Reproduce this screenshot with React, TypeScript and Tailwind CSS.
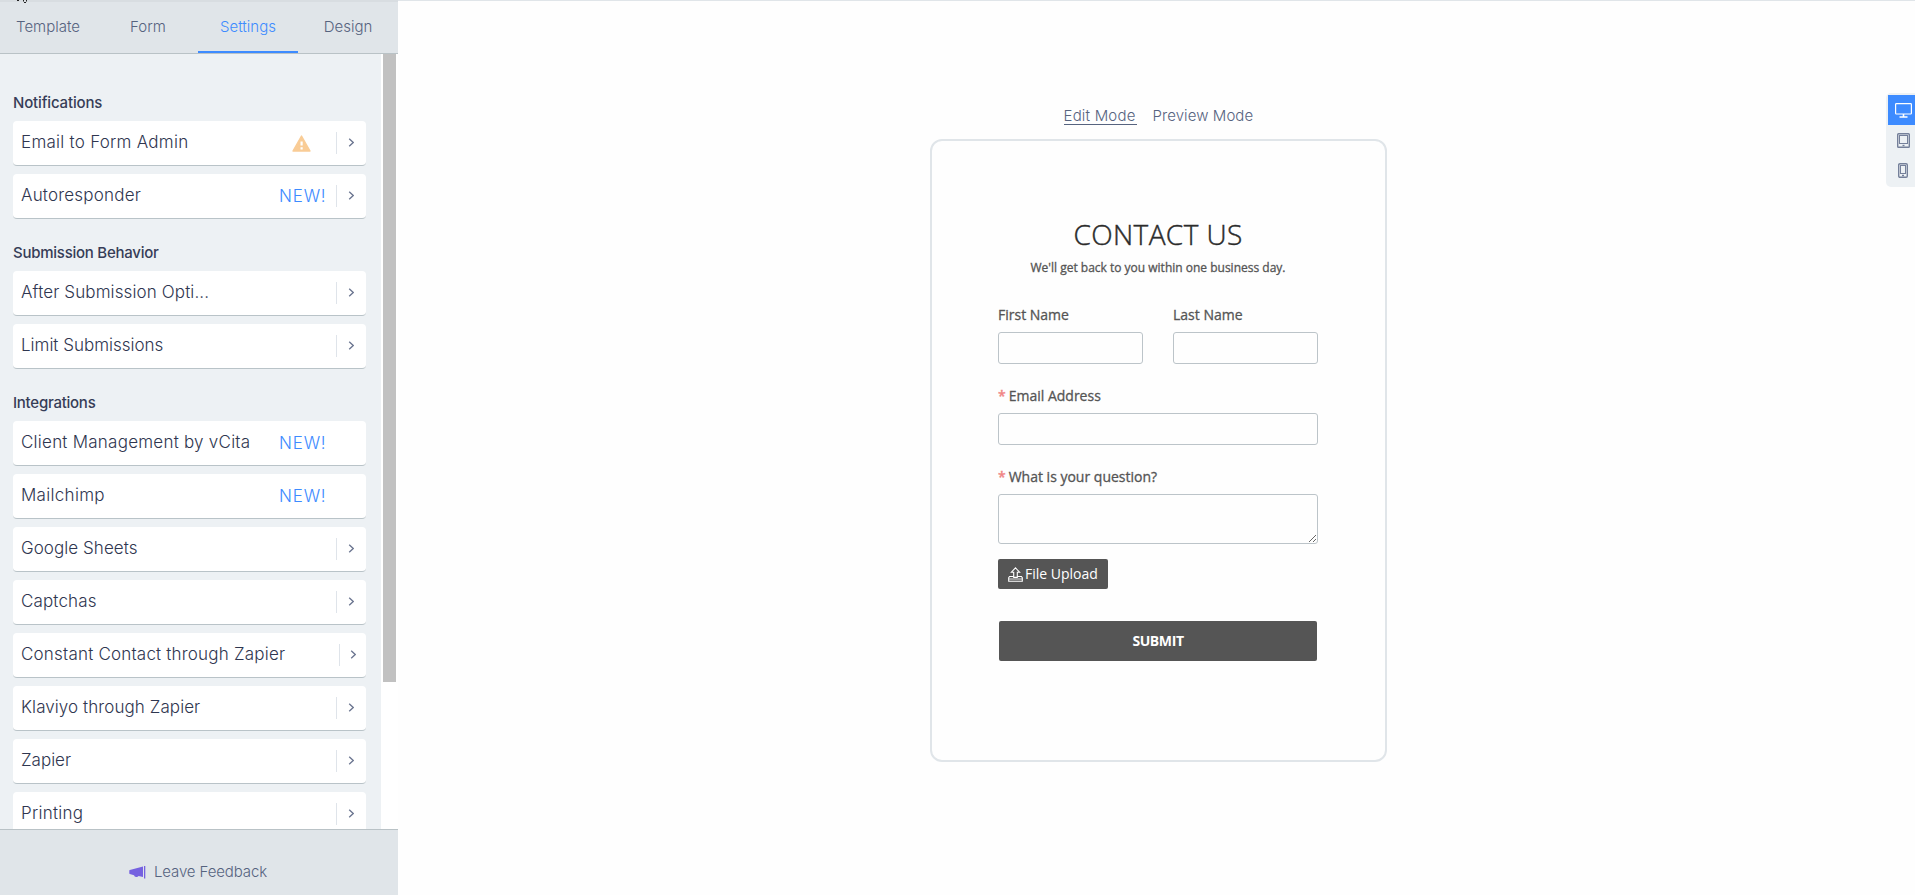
import { useState } from "react";

type Row = {
  label: string;
  tracking: string;
  isNew?: boolean;
  warning?: boolean;
  arrow?: boolean;
  wide?: boolean;
};

const tabs = ["Template", "Form", "Settings", "Design"];

const sections: { title: string; tracking: string; rows: Row[] }[] = [
  {
    title: "Notifications",
    tracking: "tracking-[-0.15px]",
    rows: [
      { label: "Email to Form Admin", tracking: "tracking-[0.26px]", warning: true, arrow: true },
      { label: "Autoresponder", tracking: "tracking-[0.2px]", isNew: true, arrow: true },
    ],
  },
  {
    title: "Submission Behavior",
    tracking: "tracking-[-0.25px]",
    rows: [
      { label: "After Submission Opti...", tracking: "tracking-[0.12px]", arrow: true },
      { label: "Limit Submissions", tracking: "tracking-normal", arrow: true },
    ],
  },
  {
    title: "Integrations",
    tracking: "tracking-[-0.25px]",
    rows: [
      { label: "Client Management by vCita", tracking: "tracking-[0.24px]", isNew: true },
      { label: "Mailchimp", tracking: "tracking-[0.3px]", isNew: true },
      { label: "Google Sheets", tracking: "tracking-[0.06px]", arrow: true },
      { label: "Captchas", tracking: "tracking-[0.14px]", arrow: true },
      { label: "Constant Contact through Zapier", tracking: "tracking-[0.2px]", arrow: true, wide: true },
      { label: "Klaviyo through Zapier", tracking: "tracking-[0.08px]", arrow: true },
      { label: "Zapier", tracking: "tracking-normal", arrow: true },
      { label: "Printing", tracking: "tracking-[0.26px]", arrow: true },
    ],
  },
];

function WarningIcon() {
  return (
    <svg width="19" height="17" viewBox="0 0 19 17" className="shrink-0">
      <path d="M9.5 1 L18 16 H1 Z" fill="#f9cc96" stroke="#f9cc96" strokeWidth="1.4" strokeLinejoin="round" />
      <path d="M8.5 6.4h2.2v4.2h-2.2z M8.5 12.2h2.2v2.2h-2.2z" fill="#fff" />
    </svg>
  );
}

function Chevron() {
  return (
    <svg width="6" height="9" viewBox="0 0 6 9" fill="none" className="shrink-0">
      <path d="M1.2 0.8 L5.2 4.5 L1.2 8.2" stroke="#6b7590" strokeWidth="1.3" />
    </svg>
  );
}

function SettingRow({ row }: { row: Row }) {
  return (
    <div className="flex h-[45px] w-[353px] shrink-0 items-center rounded-[4px] border-b border-[#b9c3c8] bg-white pl-2">
      <span
        className={`flex-1 whitespace-nowrap pb-[2px] text-[17px] font-light leading-[22px] text-[#2f3650] ${row.tracking}`}
      >
        {row.label}
      </span>
      {row.warning && (
        <span className="mr-[25px]">
          <WarningIcon />
        </span>
      )}
      {row.isNew && (
        <span className="mr-[10px] w-[47px] whitespace-nowrap text-[17px] font-light leading-[22px] tracking-[0.8px] text-[#3d8bff]">
          NEW!
        </span>
      )}
      {row.arrow ? (
        <span
          className={`flex h-[22px] items-center border-l border-[#dfe4ea] pb-px ${row.wide ? "w-[27px] pl-[10px]" : "w-[30px] pl-[11px]"}`}
        >
          <Chevron />
        </span>
      ) : (
        <span className="w-[30px]" />
      )}
    </div>
  );
}

function UploadIcon() {
  return (
    <svg width="15" height="15" viewBox="0 0 15 15" fill="none" stroke="#fff" strokeWidth="1.1">
      <path d="M7.5 0.9 L11.6 5.2 H9.3 V10.4 H5.7 V5.2 H3.4 Z" />
      <path d="M5.7 9.5 H1.6 L0.7 10.6 V14.2 H14.3 V10.6 L13.4 9.5 H9.3" />
      <path d="M0.7 12 H14.3" strokeWidth="0.8" />
    </svg>
  );
}

function MonitorIcon() {
  return (
    <svg width="17" height="15" viewBox="0 0 17 15" fill="none" stroke="#fff">
      <rect x="0.6" y="0.6" width="15.8" height="10.4" rx="0.8" strokeWidth="1.2" />
      <path d="M8.5 11v3 M4.5 14h8" strokeWidth="1.6" />
    </svg>
  );
}

function TabletIcon() {
  return (
    <svg width="13" height="15" viewBox="0 0 13 15" fill="none" stroke="#75809a">
      <rect x="0.7" y="0.7" width="11.6" height="13.6" rx="0.8" strokeWidth="1.4" />
      <rect x="2.5" y="2.5" width="8" height="8" />
      <path d="M5.5 12.5h2" strokeWidth="1.4" />
    </svg>
  );
}

function PhoneIcon() {
  return (
    <svg width="10" height="15" viewBox="0 0 10 15" fill="none" stroke="#75809a">
      <rect x="0.7" y="0.7" width="8.6" height="13.6" rx="1.2" strokeWidth="1.4" />
      <rect x="2.5" y="2.5" width="5" height="8" />
      <path d="M4 12.5h2" strokeWidth="1.4" />
    </svg>
  );
}

function MegaphoneIcon() {
  return (
    <svg width="17" height="13" viewBox="0 0 17 13" fill="#7561e0">
      <path d="M14 0.6 V11 L9.6 10 A2.6 2.4 0 0 1 5 9.2 L0.8 8 A0.8 0.8 0 0 1 0.3 7.3 V4.8 A0.8 0.8 0 0 1 0.8 4 Z" />
      <path d="M15 0h1.3v12.5H15z" />
    </svg>
  );
}

function Label({ text, required }: { text: string; required?: boolean }) {
  return (
    <label className="block h-[19px] whitespace-nowrap text-sm leading-[19px] text-[#555] [-webkit-text-stroke:0.3px]">
      {required && <span className="mr-[3px] font-semibold text-[#f08585]">*</span>}
      {text}
    </label>
  );
}

export default function App() {
  const [activeTab, setActiveTab] = useState("Settings");

  return (
    <div className="relative flex h-[895px] w-[1915px] overflow-hidden bg-[#fefefe] font-['Inter',sans-serif]">
      {/* Mouse pointer, mostly above the top edge */}
      <svg width="14" height="3" viewBox="0 0 14 3" fill="none" className="absolute top-0 left-4">
        <path d="M1 0.5h2 M7.5 0v1.5 M10.5 0v1.5 M8 2.5h2" stroke="#222" />
      </svg>

      {/* Sidebar */}
      <aside className="flex w-[398px] shrink-0 flex-col">
        <nav className="flex h-[54px] shrink-0 overflow-hidden border-t-2 border-b border-t-[#d8dde1] border-b-[#b9c2c6] bg-[#e0e5e9]">
          {tabs.map((tab) => (
            <button
              key={tab}
              onClick={() => setActiveTab(tab)}
              className={`h-[51px] w-[100px] shrink-0 border-b-2 pt-[2px] text-[15px] font-light first:-ml-0.5 ${
                activeTab === tab
                  ? "border-[#3d8bff] text-[#3d8bff]"
                  : "border-transparent text-[#56637f]"
              }`}
            >
              {tab}
            </button>
          ))}
        </nav>

        <div className="flex min-h-0 flex-1 bg-white">
          <div className="flex w-[381px] flex-col gap-[23px] overflow-hidden bg-[#edf1f4] pt-[38px] pl-[13px]">
            {sections.map((section) => (
              <section key={section.title} className="flex shrink-0 flex-col gap-2">
                <h2
                  className={`h-[21px] text-[15px] font-medium leading-[21px] text-[#363d57] ${section.tracking}`}
                >
                  {section.title}
                </h2>
                {section.rows.map((row) => (
                  <SettingRow key={row.label} row={row} />
                ))}
              </section>
            ))}
          </div>
          {/* Scrollbar */}
          <div className="ml-[2px] h-[628px] w-[13px] bg-[#c1c1c1]" />
        </div>

        <footer className="flex h-[66px] shrink-0 items-center justify-center gap-2 border-t border-[#b9c2c6] bg-[#e0e5e9] pt-[19px] pr-[2px]">
          <MegaphoneIcon />
          <span className="whitespace-nowrap text-[15px] font-light tracking-[-0.1px] text-[#56637f]">
            Leave Feedback
          </span>
        </footer>
      </aside>

      {/* Form preview */}
      <main className="flex flex-1 flex-col border-t border-[#e0e5e9]">
        <div className="flex flex-1 justify-between">
          <div className="ml-[532px] flex w-[457px] flex-col pt-[102px]">
            <div className="flex h-[36px] justify-center gap-4 text-[15px] font-light text-[#56637f]">
              <span className="h-[22px] w-[73px] whitespace-nowrap border-b border-[#56637f] leading-[26px] tracking-[0.2px]">
                Edit Mode
              </span>
              <span className="h-[22px] w-[101px] whitespace-nowrap leading-[26px] tracking-[0.08px]">
                Preview Mode
              </span>
            </div>

            <form className="flex h-[623px] flex-col rounded-[12px] border-2 border-[#e0e5e9] pt-[74px] pr-[67px] pl-[66px] font-['Open_Sans',sans-serif]">
              <h1 className="h-[38px] whitespace-nowrap text-center text-[28px] font-light leading-[38px] tracking-[0.4px] text-[#2b2b2b] [-webkit-text-stroke:0.4px]">
                CONTACT US
              </h1>
              <p className="mt-[6px] h-[17px] whitespace-nowrap text-center text-xs leading-[17px] text-[#555] [-webkit-text-stroke:0.3px]">
                We'll get back to you within one business day.
              </p>

              <div className="mt-[29px] flex gap-[30px]">
                <div className="w-[145px]">
                  <Label text="First Name" />
                  <input className="mt-2 block h-8 w-full rounded-[3px] border border-[#bcc4c9]" />
                </div>
                <div className="w-[145px]">
                  <Label text="Last Name" />
                  <input className="mt-2 block h-8 w-full rounded-[3px] border border-[#bcc4c9]" />
                </div>
              </div>

              <div className="mt-[22px]">
                <Label text="Email Address" required />
                <input className="mt-2 block h-8 w-full rounded-[3px] border border-[#bcc4c9]" />
              </div>

              <div className="mt-[22px]">
                <Label text="What is your question?" required />
                <textarea className="mt-2 block h-[50px] w-full rounded-[3px] border border-[#bcc4c9]" />
              </div>

              <button
                type="button"
                className="mt-[15px] flex h-[30px] w-[110px] items-center gap-[2px] whitespace-nowrap rounded-[2px] bg-[#555] pl-[10px] text-sm text-white"
              >
                <UploadIcon />
                File Upload
              </button>

              <button
                type="button"
                className="mx-px mt-8 h-10 rounded-[2px] bg-[#555] text-sm font-bold tracking-[-0.4px] text-white"
              >
                SUBMIT
              </button>
            </form>
          </div>

          {/* Device switcher */}
          <div className="mt-[92px] flex h-[94px] w-[29px] flex-col rounded-l-[5px] bg-[#edf1f4] pt-[2px] pl-[2px]">
            <div className="flex h-[30px] items-center bg-[#3d8bff] pl-[7px]">
              <MonitorIcon />
            </div>
            <div className="flex h-[30px] items-center pl-[9px]">
              <TabletIcon />
            </div>
            <div className="flex h-[30px] items-center pl-[10px]">
              <PhoneIcon />
            </div>
          </div>
        </div>
      </main>
    </div>
  );
}
